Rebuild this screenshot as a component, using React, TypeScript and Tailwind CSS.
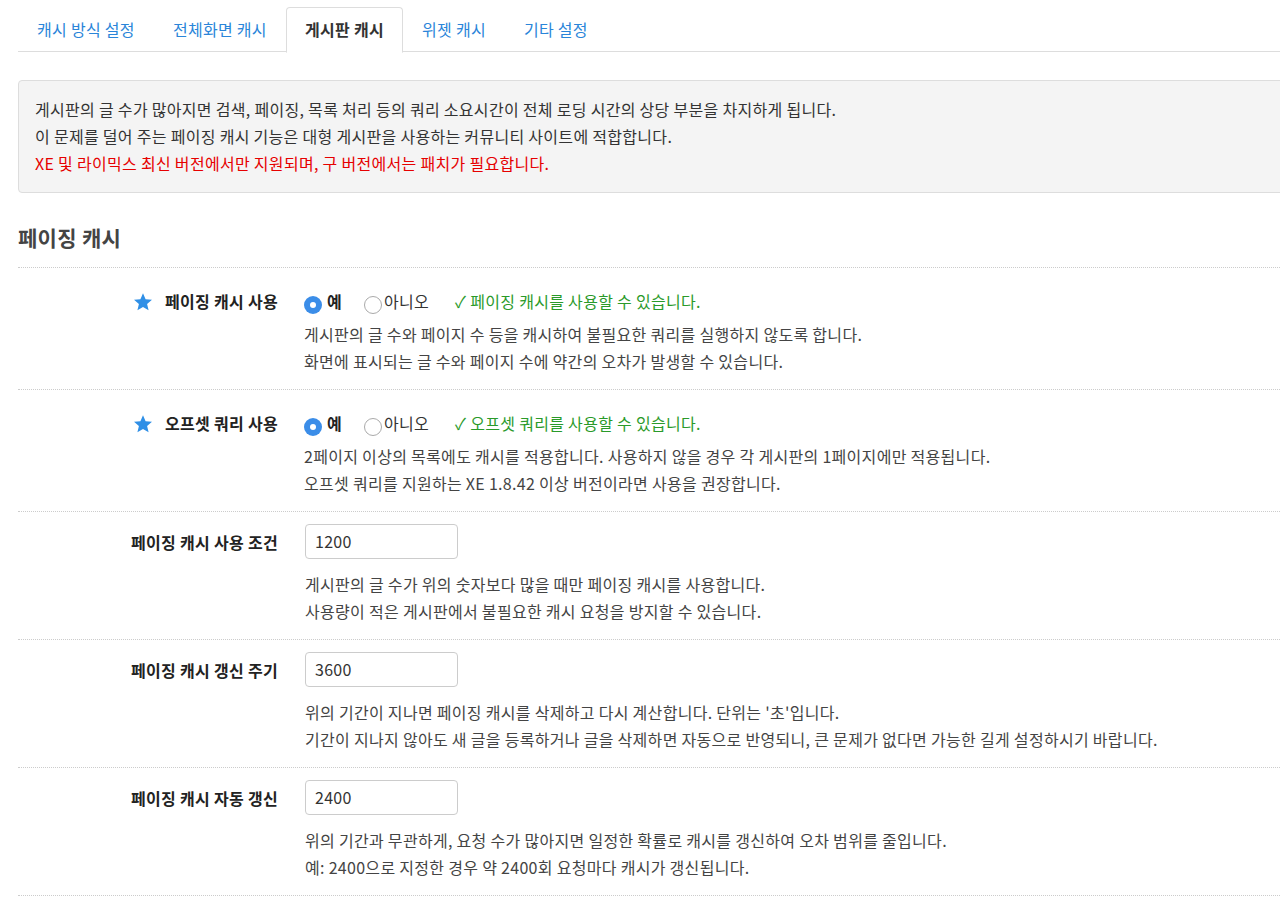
const font = { fontFamily: '"Noto Sans CJK KR", "Noto Sans", sans-serif' };

function Star() {
  return (
    <svg width="20" height="20" viewBox="0 0 24 24" className="inline-block mr-3 -mt-1">
      <path d="M12 1.5l3.1 7.2 7.7.6-5.9 5.1 1.8 7.6L12 17.9 5.3 22l1.8-7.6L1.2 9.3l7.7-.6z" fill="#2f8fe6" />
    </svg>
  );
}

function Radio({ checked }: { checked: boolean }) {
  return checked ? (
    <span className="inline-block w-[18px] h-[18px] rounded-full bg-[#3b8de8] relative top-[3px] mr-[5px]">
      <span className="absolute left-[6px] top-[6px] w-[6px] h-[6px] rounded-full bg-white" />
    </span>
  ) : (
    <span className="inline-block w-[18px] h-[18px] rounded-full border border-[#aaa] bg-white relative top-[3px] mr-[2px]" />
  );
}

function RadioRow({ label, ok, desc }: { label: string; ok: string; desc: string[] }) {
  return (
    <div className="flex border-b border-dotted border-[#ccc] pt-[20px] pb-[14px]">
      <div className="w-[286px] shrink-0 text-right pr-[26px] font-bold text-[#222] leading-[27px]">
        <Star />
        {label}
      </div>
      <div className="leading-[27px]">
        <div className="flex items-center h-[27px]">
          <label className="flex items-center font-bold text-[#222] mr-[22px]">
            <Radio checked />예
          </label>
          <label className="flex items-center text-[#333] mr-[26px]">
            <Radio checked={false} />아니오
          </label>
          <span className="text-[#2a9a2a]">✓ {ok}</span>
        </div>
        <div className="mt-[6px] text-[#444]">
          {desc.map((d) => (
            <div key={d}>{d}</div>
          ))}
        </div>
      </div>
    </div>
  );
}

function InputRow({ label, value, desc }: { label: string; value: string; desc: string[] }) {
  return (
    <div className="flex border-b border-dotted border-[#ccc] pt-[12px] pb-[14px]">
      <div className="w-[286px] shrink-0 text-right pr-[26px] font-bold text-[#222] pt-[5px] leading-[27px]">{label}</div>
      <div className="leading-[27px] pl-[1px]">
        <div className="w-[153px] h-[35px] border border-[#ccc] rounded-[4px] px-[9px] leading-[32px] text-[#333] bg-white">
          {value}
        </div>
        <div className="mt-[12px] text-[#444]">
          {desc.map((d) => (
            <div key={d}>{d}</div>
          ))}
        </div>
      </div>
    </div>
  );
}

export default function App() {
  const tabs = ['캐시 방식 설정', '전체화면 캐시', '게시판 캐시', '위젯 캐시', '기타 설정'];
  return (
    <div className="w-[1280px] h-[897px] overflow-hidden bg-white text-[16px] tracking-[0.3px]" style={font}>
      <div className="w-[1300px] pl-[18px] pt-[7px]">
        <div className="flex border-b border-[#ddd] h-[45px]">
          {tabs.map((t) => (
            <div
              key={t}
              className={
                t === '게시판 캐시'
                  ? 'px-[18px] h-[46px] leading-[42px] border border-[#ddd] border-b-white rounded-t-[4px] bg-white font-bold text-[#333]'
                  : 'px-[18px] h-[45px] leading-[42px] text-[#2a85d9] border border-transparent'
              }
            >
              {t}
            </div>
          ))}
        </div>
        <div className="mt-[28px] bg-[#f4f4f4] border border-[#ddd] rounded-[4px] px-[16px] py-[15px] leading-[27px] text-[#333]">
          <div>게시판의 글 수가 많아지면 검색, 페이징, 목록 처리 등의 쿼리 소요시간이 전체 로딩 시간의 상당 부분을 차지하게 됩니다.</div>
          <div>이 문제를 덜어 주는 페이징 캐시 기능은 대형 게시판을 사용하는 커뮤니티 사이트에 적합합니다.</div>
          <div className="text-[#e60000]">XE 및 라이믹스 최신 버전에서만 지원되며, 구 버전에서는 패치가 필요합니다.</div>
        </div>
        <h2 className="mt-[28px] text-[21px] font-semibold text-[#444] pb-[14px] border-b border-dotted border-[#ccc] leading-[32px]">
          페이징 캐시
        </h2>
        <RadioRow
          label="페이징 캐시 사용"
          ok="페이징 캐시를 사용할 수 있습니다."
          desc={['게시판의 글 수와 페이지 수 등을 캐시하여 불필요한 쿼리를 실행하지 않도록 합니다.', '화면에 표시되는 글 수와 페이지 수에 약간의 오차가 발생할 수 있습니다.']}
        />
        <RadioRow
          label="오프셋 쿼리 사용"
          ok="오프셋 쿼리를 사용할 수 있습니다."
          desc={['2페이지 이상의 목록에도 캐시를 적용합니다. 사용하지 않을 경우 각 게시판의 1페이지에만 적용됩니다.', '오프셋 쿼리를 지원하는 XE 1.8.42 이상 버전이라면 사용을 권장합니다.']}
        />
        <InputRow
          label="페이징 캐시 사용 조건"
          value="1200"
          desc={['게시판의 글 수가 위의 숫자보다 많을 때만 페이징 캐시를 사용합니다.', '사용량이 적은 게시판에서 불필요한 캐시 요청을 방지할 수 있습니다.']}
        />
        <InputRow
          label="페이징 캐시 갱신 주기"
          value="3600"
          desc={["위의 기간이 지나면 페이징 캐시를 삭제하고 다시 계산합니다. 단위는 '초'입니다.", '기간이 지나지 않아도 새 글을 등록하거나 글을 삭제하면 자동으로 반영되니, 큰 문제가 없다면 가능한 길게 설정하시기 바랍니다.']}
        />
        <InputRow
          label="페이징 캐시 자동 갱신"
          value="2400"
          desc={['위의 기간과 무관하게, 요청 수가 많아지면 일정한 확률로 캐시를 갱신하여 오차 범위를 줄입니다.', '예: 2400으로 지정한 경우 약 2400회 요청마다 캐시가 갱신됩니다.']}
        />
      </div>
    </div>
  );
}
